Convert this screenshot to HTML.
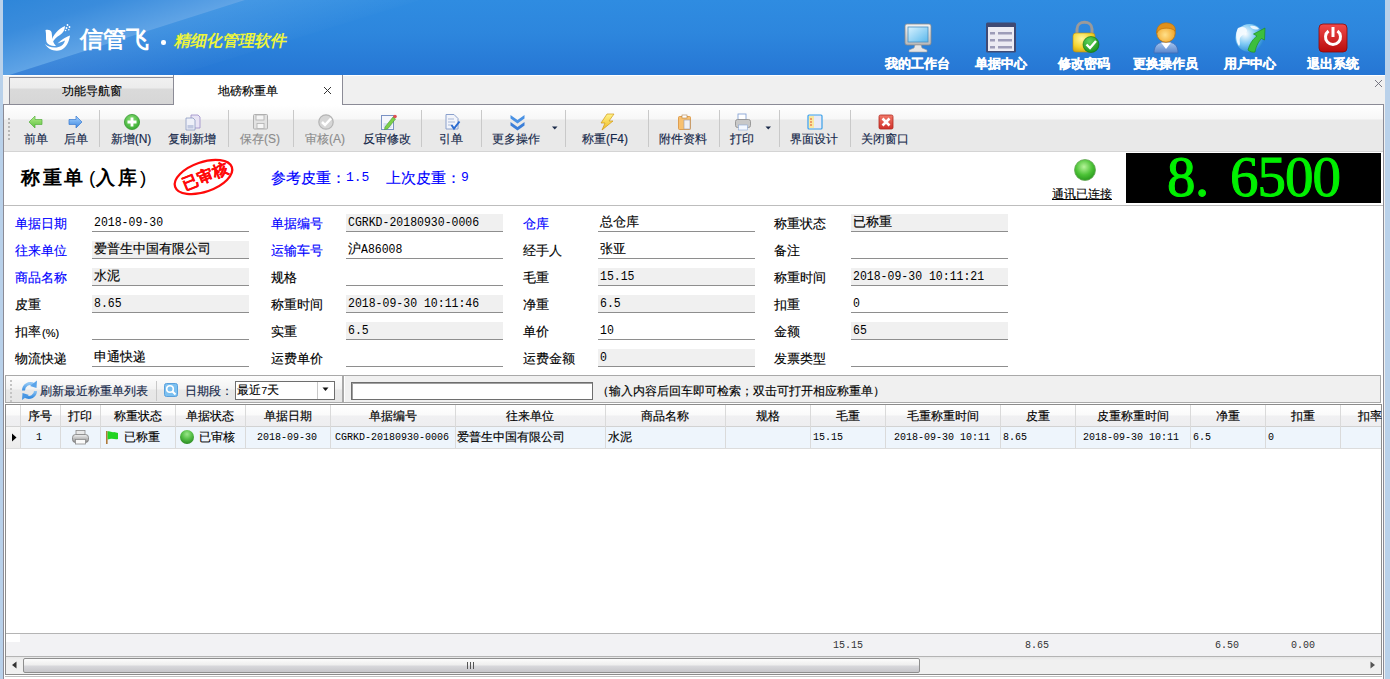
<!DOCTYPE html>
<html><head><meta charset="utf-8">
<style>
*{box-sizing:border-box;margin:0;padding:0}
html,body{width:1390px;height:679px;overflow:hidden;background:#f0f0f0;font-family:"Liberation Sans",sans-serif;font-size:12px;color:#000;-webkit-text-stroke:0.15px currentColor}
.a{position:absolute}
#hdr{left:0;top:0;width:1390px;height:75px;background:linear-gradient(#2f86dc,#2878d4);overflow:hidden}
#hl{left:0;top:0;width:1390px;height:75px;background:linear-gradient(162.4deg,rgba(255,255,255,0.16) 0,rgba(255,255,255,0.10) 39.5%,rgba(255,255,255,0) 39.6%)}
#lstrip{left:0;top:0;width:3px;height:679px;background:#b9d1ea}
#rstrip{left:1385px;top:0;width:5px;height:679px;background:#b9d1ea}
.hbtn{position:absolute;top:22px;width:70px;height:50px;text-align:center;color:#fff;font-weight:bold;font-size:12px}
.hbtn .ic{position:absolute;left:19px;top:0;width:32px;height:32px}
.hbtn .lb{position:absolute;left:-10px;width:90px;top:34px;line-height:14px;text-align:center;white-space:nowrap}
#tabbar{left:3px;top:75px;width:1382px;height:30px;background:#f0f0f0;border-top:1px solid #fff}
.tab{position:absolute;top:77px;height:28px;border:1px solid #8b8b96;border-bottom:none;text-align:center;line-height:26px;font-size:12px}
#tb{left:3px;top:104px;width:1381px;height:48px;border:1px solid #8b8b96;border-bottom:none;background:linear-gradient(#ffffff 0,#f7f7f7 14px,#e9e9e9 15px,#e9e9e9 100%)}
.tbb{position:absolute;top:0;height:46px;text-align:center;color:#15284a;font-size:12px;white-space:nowrap}
.tbb .lb{position:absolute;top:27px;left:0;right:0;line-height:14px}
.tbb .ic{position:absolute;top:9px;width:16px;height:16px}
.sep{position:absolute;top:5px;width:1px;height:37px;background:#c9c9c9}
#main{left:3px;top:151px;width:1381px;height:528px;background:#fff;border-left:1px solid #8b8b96;border-right:1px solid #8b8b96}
.lbl{position:absolute;font-size:13px;line-height:14px;white-space:nowrap}
.blue{color:#0000ff}
.inp{position:absolute;width:157px;height:18px;border-bottom:1px solid #8e8e8e;font-size:13px;line-height:15px;padding-left:2px;white-space:nowrap;overflow:hidden}
.g{background:#f0f0f0}
.tbl{top:131px;text-align:center;color:#15284a;font-size:12px;line-height:16px;white-space:nowrap}
.dis{color:#8c8c8c}
.mn{font-family:"Liberation Mono",monospace}
.bign{top:147px;font-family:'Liberation Serif',serif;font-size:57px;line-height:60px;color:#00f000;white-space:nowrap;-webkit-text-stroke:1px #00f000}
.gh{top:408px;text-align:center;font-size:12px;line-height:16px;white-space:nowrap}
.gr{top:429px;font-size:12px;line-height:16px;white-space:nowrap}
.mnr{font-family:"Liberation Mono",monospace;font-size:11.5px;transform:scaleX(0.87);transform-origin:0 0}
.ttl{top:166px;font-size:19px;font-weight:bold;line-height:24px;white-space:nowrap;letter-spacing:2.5px}
.mono,.mnr,.mn,.ttl,.nostk{-webkit-text-stroke:0 !important}
.mono{font-family:"Liberation Mono",monospace;font-size:13px;display:inline-block;transform:scaleX(0.885);transform-origin:0 0}
</style></head><body>
<div id="hdr" class="a">
<svg class="a" style="left:0;top:0" width="1390" height="75">
<defs>
<linearGradient id="hlg" gradientUnits="userSpaceOnUse" x1="0" y1="0" x2="22.5" y2="70.8"><stop offset="0" stop-color="#2e86d9"/><stop offset="0.45" stop-color="#3a8cdc"/><stop offset="1" stop-color="#60a4e6"/></linearGradient>
<linearGradient id="hlg2" gradientUnits="userSpaceOnUse" x1="22.5" y1="70.8" x2="40" y2="126"><stop offset="0" stop-color="rgba(255,255,255,0.10)"/><stop offset="1" stop-color="rgba(255,255,255,0)"/></linearGradient>
<linearGradient id="hbg" x1="0" y1="0" x2="0" y2="1"><stop offset="0" stop-color="#2f8ce1"/><stop offset="0.45" stop-color="#2d86dd"/><stop offset="1" stop-color="#2676d4"/></linearGradient>
</defs>
<rect x="0" y="0" width="1390" height="75" fill="url(#hbg)"/>
<polygon points="0,0 245,0 0,78" fill="url(#hlg)"/>
<polygon points="0,78 245,0 420,0 0,130" fill="url(#hlg2)"/>
<!-- logo mark -->
<g transform="translate(40,20)" fill="#fff">
<path d="M5.5,10 C8,9.2 10.5,9.8 11.5,12 C12,14 12,17 12.5,20 C13.5,23 15,25 16,26 C12,26.5 8,25 6.5,22 C5.5,19 6.5,15 5.5,10 Z"/>
<path d="M11.5,21 C13,15 18,9 25,6 C25,10 23,13 20,15 C16,17 13.5,20 12.5,23 Z"/>
<path d="M5,24 C8,29.5 15,32 21,30 C26,28 29,22 30,15.5 C27,16.5 23,18.5 17.5,23.5 C21,22 24,21 25,20.5 C24,25 20,27.5 15,27.5 C10.5,27.5 7,26 5,24 Z"/>
<circle cx="27.5" cy="5" r="0.9"/><circle cx="29.5" cy="7" r="0.9"/><circle cx="26.5" cy="8" r="0.9"/><circle cx="28.8" cy="9.8" r="0.8"/><circle cx="25.5" cy="10.5" r="0.8"/>
</g>
</svg>
<div class="a nostk" style="left:80px;top:25px;font-size:23px;font-weight:bold;color:#fff;letter-spacing:0px;line-height:28px">信管飞</div>
<div class="a" style="left:161px;top:40px;width:4.5px;height:4.5px;border-radius:50%;background:#fff"></div>
<div class="a nostk" style="left:175px;top:31px;font-size:16px;font-weight:bold;color:#ecf43c;line-height:20px;transform:skewX(-12deg);white-space:nowrap">精细化管理软件</div>
</div>

<!-- header buttons -->
<svg class="a" style="left:0;top:0" width="1390" height="75">
<defs>
<linearGradient id="scr" x1="0" y1="0" x2="1" y2="1"><stop offset="0" stop-color="#d8f2ff"/><stop offset="1" stop-color="#5ab8ec"/></linearGradient>
<linearGradient id="mon" x1="0" y1="0" x2="0" y2="1"><stop offset="0" stop-color="#f4f4f4"/><stop offset="1" stop-color="#b8b8b8"/></linearGradient>
<radialGradient id="lockg" cx="0.4" cy="0.3" r="0.8"><stop offset="0" stop-color="#fff7a0"/><stop offset="0.6" stop-color="#f2d22a"/><stop offset="1" stop-color="#c89a10"/></radialGradient>
<radialGradient id="chk" cx="0.4" cy="0.3" r="0.8"><stop offset="0" stop-color="#5fd35a"/><stop offset="1" stop-color="#158a17"/></radialGradient>
<radialGradient id="head" cx="0.45" cy="0.6" r="0.6"><stop offset="0" stop-color="#ffe08a"/><stop offset="1" stop-color="#f0a020"/></radialGradient>
<linearGradient id="body" x1="0" y1="0" x2="0" y2="1"><stop offset="0" stop-color="#a8c8f0"/><stop offset="1" stop-color="#5a86cc"/></linearGradient>
<radialGradient id="glb" cx="0.35" cy="0.35" r="0.75"><stop offset="0" stop-color="#ffffff"/><stop offset="0.5" stop-color="#7cc8f4"/><stop offset="1" stop-color="#1e7ed0"/></radialGradient>
<linearGradient id="pwr" x1="0" y1="0" x2="0" y2="1"><stop offset="0" stop-color="#f04a4a"/><stop offset="1" stop-color="#b80c0c"/></linearGradient>
</defs>
<!-- monitor -->
<rect x="905" y="24" width="26" height="21" rx="2" fill="url(#mon)" stroke="#8a8a8a" stroke-width="0.8"/>
<rect x="908" y="27" width="20" height="15" fill="url(#scr)" stroke="#4a90c0" stroke-width="0.8"/>
<path d="M915,45 L921,45 L922,48 L927,50 L927,52 L909,52 L909,50 L914,48 Z" fill="#e6e6e6" stroke="#9a9a9a" stroke-width="0.6"/>
<!-- doc list -->
<rect x="986" y="22.5" width="30" height="30" rx="1.5" fill="#3f4a74"/>
<rect x="988" y="27" width="26" height="24" fill="#ecebf3"/>
<rect x="990" y="32" width="5" height="2.5" fill="#9d9cb8"/><rect x="998" y="32" width="14" height="2.5" fill="#9d9cb8"/>
<rect x="990" y="39" width="5" height="2.5" fill="#9d9cb8"/><rect x="998" y="39" width="14" height="2.5" fill="#9d9cb8"/>
<rect x="990" y="46" width="5" height="2.5" fill="#9d9cb8"/><rect x="998" y="46" width="14" height="2.5" fill="#9d9cb8"/>
<!-- lock -->
<path d="M1077,34 L1077,29 C1077,20 1092,20 1092,29 L1092,34" fill="none" stroke="#9a9a9a" stroke-width="3"/>
<rect x="1073" y="33" width="22" height="19" rx="3" fill="url(#lockg)" stroke="#c09010" stroke-width="0.6"/>
<circle cx="1091" cy="44.5" r="8" fill="url(#chk)" stroke="#0e6e10" stroke-width="0.6"/>
<path d="M1086.5,44.5 L1090,48 L1096,41" fill="none" stroke="#fff" stroke-width="2.4"/>
<!-- person -->
<path d="M1154,53 C1154,45 1158,42 1166,42 C1174,42 1178,45 1178,53 Z" fill="url(#body)" stroke="#3d6cb8" stroke-width="0.8"/>
<path d="M1161,42.5 L1166,49 L1171,42.5 Z" fill="#fff"/>
<circle cx="1166" cy="33" r="9.3" fill="url(#head)" stroke="#b8700c" stroke-width="0.8"/>
<path d="M1156.8,33 C1156,24 1164,22 1168,23 C1173,23.5 1176,27 1175.2,31 C1172,28 1166,27.5 1161,29 C1159,30 1158,31 1156.8,33 Z" fill="#e0901a" stroke="#b8700c" stroke-width="0.6"/>
<!-- globe -->
<circle cx="1249.5" cy="38" r="14" fill="url(#glb)"/>
<path d="M1238,28 C1242,26 1247,27 1247,31 C1246,35 1242,34 1240,38 C1239,41 1241,44 1239,46 C1236,42 1235,33 1238,28 Z" fill="#f4fbff" opacity="0.95"/>
<path d="M1250,26 C1254,25 1258,27 1259,29 C1256,30 1252,30 1250,26 Z" fill="#f4fbff" opacity="0.9"/>
<path d="M1248,50 C1250,43 1253,39 1257,36 L1253.5,34 L1265,28 L1264.5,40 L1261.5,38.5 C1259,41 1256,46 1255,52 C1253,52.5 1250,52 1248,50 Z" fill="#3cbf3c" stroke="#1f8f1f" stroke-width="0.7"/>
<!-- power -->
<rect x="1319" y="24" width="28" height="28" rx="4" fill="url(#pwr)" stroke="#8a0808" stroke-width="0.8"/>
<path d="M1328.5,31 A7.5,7.5 0 1 0 1337.5,31" fill="none" stroke="#fff" stroke-width="3"/>
<line x1="1333" y1="27" x2="1333" y2="37" stroke="#fff" stroke-width="3"/>
</svg>
<div class="a" style="left:870px;top:56px;width:95px;text-align:center;color:#fff;font-weight:bold;font-size:13px;line-height:16px;-webkit-text-stroke:0.3px #fff">我的工作台</div>
<div class="a" style="left:953px;top:56px;width:95px;text-align:center;color:#fff;font-weight:bold;font-size:13px;line-height:16px;-webkit-text-stroke:0.3px #fff">单据中心</div>
<div class="a" style="left:1036px;top:56px;width:95px;text-align:center;color:#fff;font-weight:bold;font-size:13px;line-height:16px;-webkit-text-stroke:0.3px #fff">修改密码</div>
<div class="a" style="left:1118px;top:56px;width:95px;text-align:center;color:#fff;font-weight:bold;font-size:13px;line-height:16px;-webkit-text-stroke:0.3px #fff">更换操作员</div>
<div class="a" style="left:1202px;top:56px;width:95px;text-align:center;color:#fff;font-weight:bold;font-size:13px;line-height:16px;-webkit-text-stroke:0.3px #fff">用户中心</div>
<div class="a" style="left:1285px;top:56px;width:95px;text-align:center;color:#fff;font-weight:bold;font-size:13px;line-height:16px;-webkit-text-stroke:0.3px #fff">退出系统</div>
<div id="lstrip" class="a"></div>
<div id="rstrip" class="a"></div>

<div id="tabbar" class="a"></div>
<div class="tab" style="left:9px;width:165px;background:linear-gradient(#f1f1f1 0,#ececec 10px,#dadada 11px,#d6d6d6 100%)">功能导航窗</div>
<div class="tab" style="left:173px;top:75px;width:170px;background:#fff;height:30px;border-top:none;z-index:2;padding-top:2px"><span style="position:absolute;left:44px;top:3px">地磅称重单</span><svg style="position:absolute;left:149px;top:11px" width="9" height="9"><path d="M1,1 L8,8 M8,1 L1,8" stroke="#333" stroke-width="1"/></svg></div>

<svg class="a" style="left:1374px;top:79px" width="10" height="10"><path d="M1,1 L8,8 M8,1 L1,8" stroke="#6a6a76" stroke-width="0.9"/></svg>
<div id="tb" class="a"></div>
<div id="main" class="a"></div>


<!-- title area -->
<div class="a" style="left:4px;top:151px;width:1379px;height:1px;background:#d4d4d4"></div>
<div class="a ttl" style="left:21px">称重单</div><div class="a ttl" style="left:89px;font-weight:normal;-webkit-text-stroke:0.6px #000">(</div><div class="a ttl" style="left:96px">入库</div><div class="a ttl" style="left:140px;font-weight:normal;-webkit-text-stroke:0.6px #000">)</div>
<svg class="a" style="left:168px;top:154px" width="72" height="46">
<g transform="rotate(-19 35.5 23)">
<ellipse cx="35.5" cy="23" rx="30" ry="14.8" fill="none" stroke="#ff0a0a" stroke-width="2.3"/>
</g>
<g transform="rotate(-22 36 23)">
<text x="37.5" y="28" text-anchor="middle" font-size="15.5" font-weight="bold" fill="#ff0a0a" stroke="#ff0a0a" stroke-width="0.3" font-family="Liberation Sans,sans-serif">已审核</text>
</g>
</svg>
<div class="a" style="left:271px;top:169px;font-size:14.5px;line-height:18px;color:#0000ff;white-space:nowrap">参考皮重：</div><div class="a mn" style="left:346px;top:169px;font-size:13px;line-height:18px;color:#0000ff;letter-spacing:0px">1.5</div><div class="a" style="left:386px;top:169px;font-size:14.5px;line-height:18px;color:#0000ff;white-space:nowrap">上次皮重：</div><div class="a mn" style="left:461px;top:169px;font-size:13px;line-height:18px;color:#0000ff">9</div>
<svg class="a" style="left:1072px;top:157px" width="26" height="26">
<defs><radialGradient id="led" cx="0.45" cy="0.35" r="0.65"><stop offset="0" stop-color="#b6f49a"/><stop offset="0.6" stop-color="#4cc236"/><stop offset="1" stop-color="#2a9a1e"/></radialGradient></defs>
<circle cx="13" cy="13" r="10.5" fill="url(#led)" stroke="#6aa85a" stroke-width="0.8"/>
</svg>
<div class="a" style="left:1052px;top:186px;font-size:12px;line-height:16px;text-decoration:underline;white-space:nowrap">通讯已连接</div>
<div class="a" style="left:1126px;top:153px;height:50px;background:#000;width:255px"></div>
<div class="a bign" style="left:1167px">8</div><div class="a bign" style="left:1195px">.</div><div class="a bign" style="left:1230px;letter-spacing:-1px">6500</div>
<div class="a" style="left:4px;top:205px;width:1379px;height:1px;background:#bdbdbd"></div>

<!-- form -->
<div class="a lbl blue" style="left:15px;top:217px">单据日期</div>
<div class="inp" style="left:92px;top:214px"><span class="mono">2018-09-30</span></div>
<div class="a lbl blue" style="left:271px;top:217px">单据编号</div>
<div class="inp g" style="left:346px;top:214px"><span class="mono">CGRKD-20180930-0006</span></div>
<div class="a lbl blue" style="left:523px;top:217px">仓库</div>
<div class="inp" style="left:598px;top:214px">总仓库</div>
<div class="a lbl" style="left:774px;top:217px">称重状态</div>
<div class="inp g" style="left:851px;top:214px">已称重</div>
<div class="a lbl blue" style="left:15px;top:244px">往来单位</div>
<div class="inp g" style="left:92px;top:241px">爱普生中国有限公司</div>
<div class="a lbl blue" style="left:271px;top:244px">运输车号</div>
<div class="inp" style="left:346px;top:241px">沪<span class="mono">A86008</span></div>
<div class="a lbl" style="left:523px;top:244px">经手人</div>
<div class="inp" style="left:598px;top:241px">张亚</div>
<div class="a lbl" style="left:774px;top:244px">备注</div>
<div class="inp" style="left:851px;top:241px"></div>
<div class="a lbl blue" style="left:15px;top:271px">商品名称</div>
<div class="inp g" style="left:92px;top:268px">水泥</div>
<div class="a lbl" style="left:271px;top:271px">规格</div>
<div class="inp" style="left:346px;top:268px"></div>
<div class="a lbl" style="left:523px;top:271px">毛重</div>
<div class="inp g" style="left:598px;top:268px"><span class="mono">15.15</span></div>
<div class="a lbl" style="left:774px;top:271px">称重时间</div>
<div class="inp g" style="left:851px;top:268px"><span class="mono">2018-09-30 10:11:21</span></div>
<div class="a lbl" style="left:15px;top:298px">皮重</div>
<div class="inp g" style="left:92px;top:295px"><span class="mono">8.65</span></div>
<div class="a lbl" style="left:271px;top:298px">称重时间</div>
<div class="inp g" style="left:346px;top:295px"><span class="mono">2018-09-30 10:11:46</span></div>
<div class="a lbl" style="left:523px;top:298px">净重</div>
<div class="inp g" style="left:598px;top:295px"><span class="mono">6.5</span></div>
<div class="a lbl" style="left:774px;top:298px">扣重</div>
<div class="inp" style="left:851px;top:295px"><span class="mono">0</span></div>
<div class="a lbl" style="left:15px;top:325px">扣率</div><div class="a lbl" style="left:42px;top:326px;font-size:11px">(%)</div>
<div class="inp" style="left:92px;top:322px"></div>
<div class="a lbl" style="left:271px;top:325px">实重</div>
<div class="inp g" style="left:346px;top:322px"><span class="mono">6.5</span></div>
<div class="a lbl" style="left:523px;top:325px">单价</div>
<div class="inp" style="left:598px;top:322px"><span class="mono">10</span></div>
<div class="a lbl" style="left:774px;top:325px">金额</div>
<div class="inp g" style="left:851px;top:322px"><span class="mono">65</span></div>
<div class="a lbl" style="left:15px;top:352px">物流快递</div>
<div class="inp" style="left:92px;top:349px">申通快递</div>
<div class="a lbl" style="left:271px;top:352px">运费单价</div>
<div class="inp" style="left:346px;top:349px"></div>
<div class="a lbl" style="left:523px;top:352px">运费金额</div>
<div class="inp g" style="left:598px;top:349px"><span class="mono">0</span></div>
<div class="a lbl" style="left:774px;top:352px">发票类型</div>
<div class="inp" style="left:851px;top:349px"></div>
<!-- search bar -->
<div class="a" style="left:5px;top:375px;width:338px;height:28px;border:1px solid #a9a9a9;background:linear-gradient(#fdfdfd 0,#f3f3f3 13px,#e8e8e8 14px,#e6e6e6 100%)"></div>
<div class="a" style="left:343px;top:375px;width:1038px;height:28px;border:1px solid #a9a9a9;background:#f0f0f0;box-shadow:inset 1px 0 #fff"></div>
<svg class="a" style="left:0;top:375px" width="360" height="30">
<g fill="#c4c4c4"><rect x="10" y="5" width="2" height="2"/><rect x="10" y="9" width="2" height="2"/><rect x="10" y="13" width="2" height="2"/><rect x="10" y="17" width="2" height="2"/><rect x="10" y="21" width="2" height="2"/><rect x="10" y="25" width="2" height="2"/></g>
<defs><linearGradient id="rfg" x1="0" y1="0" x2="0" y2="1"><stop offset="0" stop-color="#8cc4f4"/><stop offset="1" stop-color="#3a8ee0"/></linearGradient></defs>
<path d="M23.5,15.5 C23.5,10 29,7 34,9.5" fill="none" stroke="url(#rfg)" stroke-width="3"/>
<path d="M37,5.5 L36.5,13 L30,11 Z" fill="#5aa4ea"/>
<path d="M35.5,16 C35.5,21 30,24 25,21.5" fill="none" stroke="url(#rfg)" stroke-width="3"/>
<path d="M22,25 L22.5,18 L29,20 Z" fill="#4a98e4"/>
<rect x="156" y="6" width="1" height="20" fill="#c8c8c8"/>
<rect x="164.5" y="8.5" width="13" height="13" rx="2" fill="#7cc0f0" stroke="#5aa0dc" stroke-width="1"/>
<circle cx="170" cy="14" r="3.3" fill="none" stroke="#fff" stroke-width="1.6"/>
<path d="M172.5,16.5 L175.5,19.5" stroke="#fff" stroke-width="2"/>
</svg>
<div class="a" style="left:40px;top:383px;font-size:12px;line-height:16px;color:#15284a;white-space:nowrap">刷新最近称重单列表</div>
<div class="a" style="left:185px;top:383px;font-size:12px;line-height:16px;color:#15284a;white-space:nowrap">日期段：</div>
<div class="a" style="left:235px;top:381px;width:100px;height:19px;border:1px solid #6e6e6e;background:#fff"></div>
<div class="a" style="left:317px;top:382px;width:1px;height:17px;background:#c8c8c8"></div>
<svg class="a" style="left:322px;top:387px" width="8" height="5"><path d="M0.5,0.5 L6.5,0.5 L3.5,4 Z" fill="#111"/></svg>
<div class="a" style="left:237px;top:382px;font-size:12px;line-height:17px;white-space:nowrap">最近<span class="mn" style="font-size:11px;letter-spacing:-1px">7</span>天</div>
<div class="a" style="left:351px;top:382px;width:242px;height:18px;border:1px solid #6e6e6e;background:#fff;box-shadow:inset 1px 1px #a0a0a0"></div>
<div class="a" style="left:597px;top:383px;font-size:12px;line-height:16px;white-space:nowrap">（输入内容后回车即可检索；双击可打开相应称重单）</div>

<div class="a" style="left:5px;top:404px;width:1377px;height:271px;border:1px solid #8c8c8c;background:#fff"></div>
<div class="a" style="left:6px;top:405px;width:1375px;height:21px;background:linear-gradient(#ffffff 0,#fafafa 10px,#f0f0f2 11px,#eeeef0 100%)"></div>
<div class="a" style="left:6px;top:426px;width:1375px;height:1px;background:#d2d2d2"></div>
<div class="a" style="left:20px;top:427px;width:1361px;height:21px;background:#eef5fc"></div>
<div class="a" style="left:6px;top:427px;width:14px;height:21px;background:linear-gradient(#f6f6f6,#ececec)"></div>
<div class="a" style="left:6px;top:448px;width:1375px;height:1px;background:#dcdcdc"></div>
<div class="a" style="left:20px;top:405px;width:1px;height:43px;background:#dadada"></div>
<div class="a" style="left:60px;top:405px;width:1px;height:43px;background:#dadada"></div>
<div class="a" style="left:100px;top:405px;width:1px;height:43px;background:#dadada"></div>
<div class="a" style="left:175px;top:405px;width:1px;height:43px;background:#dadada"></div>
<div class="a" style="left:245px;top:405px;width:1px;height:43px;background:#dadada"></div>
<div class="a" style="left:330px;top:405px;width:1px;height:43px;background:#dadada"></div>
<div class="a" style="left:455px;top:405px;width:1px;height:43px;background:#dadada"></div>
<div class="a" style="left:605px;top:405px;width:1px;height:43px;background:#dadada"></div>
<div class="a" style="left:725px;top:405px;width:1px;height:43px;background:#dadada"></div>
<div class="a" style="left:810px;top:405px;width:1px;height:43px;background:#dadada"></div>
<div class="a" style="left:885px;top:405px;width:1px;height:43px;background:#dadada"></div>
<div class="a" style="left:1000px;top:405px;width:1px;height:43px;background:#dadada"></div>
<div class="a" style="left:1075px;top:405px;width:1px;height:43px;background:#dadada"></div>
<div class="a" style="left:1190px;top:405px;width:1px;height:43px;background:#dadada"></div>
<div class="a" style="left:1265px;top:405px;width:1px;height:43px;background:#dadada"></div>
<div class="a" style="left:1340px;top:405px;width:1px;height:43px;background:#dadada"></div>
<div class="a gh" style="left:20px;width:40px">序号</div>
<div class="a gh" style="left:60px;width:40px">打印</div>
<div class="a gh" style="left:100px;width:75px">称重状态</div>
<div class="a gh" style="left:175px;width:70px">单据状态</div>
<div class="a gh" style="left:245px;width:85px">单据日期</div>
<div class="a gh" style="left:330px;width:125px">单据编号</div>
<div class="a gh" style="left:455px;width:150px">往来单位</div>
<div class="a gh" style="left:605px;width:120px">商品名称</div>
<div class="a gh" style="left:725px;width:85px">规格</div>
<div class="a gh" style="left:810px;width:75px">毛重</div>
<div class="a gh" style="left:885px;width:115px">毛重称重时间</div>
<div class="a gh" style="left:1000px;width:75px">皮重</div>
<div class="a gh" style="left:1075px;width:115px">皮重称重时间</div>
<div class="a gh" style="left:1190px;width:75px">净重</div>
<div class="a gh" style="left:1265px;width:75px">扣重</div>
<div class="a gh" style="left:1340px;width:60px">扣率</div>
<div class="a" style="left:1382px;top:405px;width:1px;height:0px"></div>
<svg class="a" style="left:10px;top:433px" width="8" height="10"><path d="M2,0.5 L6.5,4.5 L2,8.5 Z" fill="#000"/></svg>
<div class="a gr mnr" style="left:36px">1</div>
<svg class="a" style="left:71px;top:429px" width="20" height="18">
<defs><linearGradient id="prg" x1="0" y1="0" x2="0" y2="1"><stop offset="0" stop-color="#f2f2f2"/><stop offset="1" stop-color="#8a8a8a"/></linearGradient></defs>
<rect x="5" y="1.5" width="9" height="5" fill="#e8e8e8" stroke="#8a8a8a" stroke-width="0.8"/>
<rect x="1.5" y="5.5" width="16" height="8" rx="3" fill="url(#prg)" stroke="#7a7a7a" stroke-width="0.8"/>
<rect x="4.5" y="10.5" width="10" height="4.5" fill="#fafafa" stroke="#8a8a8a" stroke-width="0.8"/>
</svg>
<svg class="a" style="left:104px;top:430px" width="16" height="15">
<rect x="2" y="1" width="1.6" height="13" fill="#b07a3a"/>
<path d="M3.6,1.5 C6,0.5 8,3 10,2 L14,3 L14,9 C11,10 9,8 6,9 L3.6,9.5 Z" fill="#22d422"/>
</svg>
<div class="a gr" style="left:124px">已称重</div>
<svg class="a" style="left:179px;top:429px" width="16" height="16">
<defs><radialGradient id="gb" cx="0.5" cy="0.3" r="0.7"><stop offset="0" stop-color="#9ae68a"/><stop offset="0.5" stop-color="#56c048"/><stop offset="1" stop-color="#2a8a22"/></radialGradient></defs>
<circle cx="8" cy="8" r="7" fill="url(#gb)"/>
</svg>
<div class="a gr" style="left:199px">已审核</div>
<div class="a gr mnr" style="left:257px">2018-09-30</div>
<div class="a gr mnr" style="left:335px">CGRKD-20180930-0006</div>
<div class="a gr" style="left:457px">爱普生中国有限公司</div>
<div class="a gr" style="left:608px">水泥</div>
<div class="a gr mnr" style="left:813px">15.15</div>
<div class="a gr mnr" style="left:894px">2018-09-30 10:11</div>
<div class="a gr mnr" style="left:1003px">8.65</div>
<div class="a gr mnr" style="left:1083px">2018-09-30 10:11</div>
<div class="a gr mnr" style="left:1193px">6.5</div>
<div class="a gr mnr" style="left:1268px">0</div>
<div class="a" style="left:6px;top:633px;width:1375px;height:1px;background:#b4b4b4"></div>
<div class="a" style="left:6px;top:634px;width:1375px;height:22px;background:#f2f2f4"></div>
<div class="a" style="left:6px;top:634px;width:14px;height:8px;background:#fff"></div>
<div class="a" style="left:6px;top:656px;width:1375px;height:1px;background:#b4b4b4"></div>
<div class="a gr mnr" style="left:833px;top:637px;color:#333">15.15</div>
<div class="a gr mnr" style="left:1025px;top:637px;color:#333">8.65</div>
<div class="a gr mnr" style="left:1215px;top:637px;color:#333">6.50</div>
<div class="a gr mnr" style="left:1291px;top:637px;color:#333">0.00</div>
<div class="a" style="left:6px;top:657px;width:1375px;height:17px;background:linear-gradient(#e6e6e6,#f0f0f0 3px,#f0f0f0)"></div>
<svg class="a" style="left:10px;top:661px" width="8" height="9"><path d="M6.5,0.5 L6.5,7.5 L2,4 Z" fill="#333"/></svg>
<svg class="a" style="left:1369px;top:661px" width="8" height="9"><path d="M1.5,0.5 L1.5,7.5 L6,4 Z" fill="#555"/></svg>
<div class="a" style="left:23px;top:658px;width:897px;height:15px;border:1px solid #8e8e8e;border-radius:2px;background:linear-gradient(#fcfcfc 0,#eeeeee 6px,#d8d8dc 7px,#c6c6ca 100%)"></div>
<div class="a" style="left:467px;top:662px;width:7px;height:7px;border-left:1px solid #555;border-right:1px solid #555"><div class="a" style="left:2px;top:0;width:1px;height:7px;background:#555"></div></div>
<div class="a" style="left:5px;top:676px;width:1377px;height:1px;background:#c0c0c0"></div>
<!-- toolbar -->
<svg class="a" style="left:0;top:104px" width="920" height="48">
<defs>
<linearGradient id="garr" x1="0" y1="0" x2="0" y2="1"><stop offset="0" stop-color="#b6ee8a"/><stop offset="1" stop-color="#5cc040"/></linearGradient>
<linearGradient id="barr" x1="0" y1="0" x2="0" y2="1"><stop offset="0" stop-color="#a8d4ff"/><stop offset="1" stop-color="#3a86e0"/></linearGradient>
<radialGradient id="gplus" cx="0.45" cy="0.35" r="0.7"><stop offset="0" stop-color="#8ee27a"/><stop offset="1" stop-color="#2fa52a"/></radialGradient>
<linearGradient id="bolt" x1="0" y1="0" x2="0" y2="1"><stop offset="0" stop-color="#fff48a"/><stop offset="1" stop-color="#f0b820"/></linearGradient>
<linearGradient id="redx" x1="0" y1="0" x2="0" y2="1"><stop offset="0" stop-color="#f27a6a"/><stop offset="1" stop-color="#d0302a"/></linearGradient>
</defs>
<g fill="#b8b8b8"><rect x="8" y="14" width="2" height="2"/><rect x="8" y="18" width="2" height="2"/><rect x="8" y="22" width="2" height="2"/><rect x="8" y="26" width="2" height="2"/><rect x="8" y="30" width="2" height="2"/><rect x="8" y="34" width="2" height="2"/></g>
<!-- prev arrow -->
<path d="M29,18 L35,12 L35,15.5 L42,15.5 L42,20.5 L35,20.5 L35,24 Z" fill="url(#garr)" stroke="#58b040" stroke-width="0.7"/>
<!-- next arrow -->
<path d="M82,18 L76,12 L76,15.5 L69,15.5 L69,20.5 L76,20.5 L76,24 Z" fill="url(#barr)" stroke="#3a7ad0" stroke-width="0.7"/>
<rect x="99" y="6" width="1" height="37" fill="#c9c9c9"/>
<!-- plus -->
<circle cx="132" cy="18" r="7.6" fill="url(#gplus)" stroke="#3a9a34" stroke-width="0.8"/>
<path d="M132,13.5 L132,22.5 M127.5,18 L136.5,18" stroke="#fff" stroke-width="2.8"/>
<!-- copy -->
<path d="M191,11 L198,11 L200,13 L200,24 L191,24 Z" fill="#e8e4f4" stroke="#9a8ac8" stroke-width="0.8"/>
<path d="M186,14 L193,14 L195,16 L195,26 L186,26 Z" fill="#eef0f8" stroke="#8a9ac0" stroke-width="0.8"/>
<rect x="187.5" y="21" width="6" height="3.5" fill="#c0c8e0"/>
<rect x="228" y="6" width="1" height="37" fill="#c9c9c9"/>
<!-- floppy disabled -->
<rect x="253.5" y="10.5" width="14" height="14.5" rx="1" fill="#e2e2e2" stroke="#b0b0b0" stroke-width="1"/>
<rect x="256" y="11" width="8" height="5" fill="#f6f6f6" stroke="#b0b0b0" stroke-width="0.8"/>
<rect x="257" y="19.5" width="7" height="5" fill="#f6f6f6" stroke="#b0b0b0" stroke-width="0.8"/>
<rect x="293" y="6" width="1" height="37" fill="#c9c9c9"/>
<!-- check disabled -->
<circle cx="326" cy="18" r="7.2" fill="#d6d6d6" stroke="#b4b4b4" stroke-width="1.2"/>
<path d="M322,18 L325,21 L331,14.5" fill="none" stroke="#fff" stroke-width="2.5"/>
<!-- edit doc -->
<rect x="381.5" y="11.5" width="12" height="14" fill="#f4f6fc" stroke="#7a92c4" stroke-width="1"/>
<rect x="383.5" y="19" width="8" height="5" fill="#d8e0f4"/>
<path d="M385,23 L393,13 L395.5,15 L387.5,25 L384.5,25.5 Z" fill="#7cd04a" stroke="#4a9a30" stroke-width="0.6"/>
<circle cx="395" cy="12.5" r="1.8" fill="#e05050"/>
<rect x="421" y="6" width="1" height="37" fill="#c9c9c9"/>
<!-- yindan -->
<path d="M446,10.5 L454,10.5 L458,14.5 L458,25 L446,25 Z" fill="#f2f4fa" stroke="#8aa0cc" stroke-width="1"/>
<path d="M448,15 L454,15 M448,18 L455,18 M448,21 L452,21" stroke="#a8b8d8" stroke-width="1"/>
<path d="M451.5,21 L454,24.5 L459.5,17.5" fill="none" stroke="#2a6ad0" stroke-width="2"/>
<rect x="481" y="6" width="1" height="37" fill="#c9c9c9"/>
<!-- more chevrons -->
<path d="M510.5,11 L517.5,16 L524.5,11 L524.5,14.5 L517.5,19.5 L510.5,14.5 Z" fill="#4a92e4"/>
<path d="M510.5,18 L517.5,23 L524.5,18 L524.5,21.5 L517.5,26.5 L510.5,21.5 Z" fill="#3a7ed8"/>
<path d="M552,22.5 L557.5,22.5 L554.75,25.5 Z" fill="#1a2a4a"/>
<rect x="565" y="6" width="1" height="37" fill="#c9c9c9"/>
<!-- bolt -->
<path d="M607,10 L614,10 L609,17 L613,17 L602,26 L605,19 L601,19 Z" fill="url(#bolt)" stroke="#d09a18" stroke-width="0.7"/>
<rect x="648" y="6" width="1" height="37" fill="#c9c9c9"/>
<!-- clipboard -->
<rect x="678.5" y="12.5" width="12" height="13" rx="1" fill="#f8c070" stroke="#d8903a" stroke-width="0.8"/>
<rect x="682" y="11" width="5" height="3" fill="#fff" stroke="#b0804a" stroke-width="0.6"/>
<rect x="684" y="16" width="6" height="9" fill="#f0f0f4" stroke="#9a9aaa" stroke-width="0.6"/>
<rect x="719" y="6" width="1" height="37" fill="#c9c9c9"/>
<!-- printer -->
<rect x="738" y="10" width="8" height="6" fill="#fff" stroke="#7a9ad0" stroke-width="0.8"/>
<rect x="735.5" y="15.5" width="15" height="8" rx="2" fill="#c8c8c8" stroke="#8a8a8a" stroke-width="0.8"/>
<rect x="738.5" y="21" width="9" height="5" fill="#f4f8ff" stroke="#8aa8d8" stroke-width="0.6"/>
<path d="M765.5,22.5 L771,22.5 L768.25,25.5 Z" fill="#1a2a4a"/>
<rect x="779" y="6" width="1" height="37" fill="#c9c9c9"/>
<!-- ui design -->
<rect x="808" y="11" width="14" height="14" rx="1" fill="#e8eaf6" stroke="#3aa0e8" stroke-width="1.2"/>
<rect x="809" y="12" width="5" height="12" fill="#f8e8a0"/>
<path d="M810,15 L812,15 M810,18 L812,18 M810,21 L812,21" stroke="#e05030" stroke-width="1.2"/>
<rect x="850" y="6" width="1" height="37" fill="#c9c9c9"/>
<!-- close red x -->
<rect x="879" y="11" width="14" height="14" rx="1.5" fill="url(#redx)" stroke="#b02a20" stroke-width="0.8"/>
<path d="M882.5,14.5 L889.5,21.5 M889.5,14.5 L882.5,21.5" stroke="#fff" stroke-width="2.6"/>
</svg>
<div class="a tbl" style="left:11px;width:50px">前单</div>
<div class="a tbl" style="left:51px;width:50px">后单</div>
<div class="a tbl" style="left:101px;width:60px">新增(N)</div>
<div class="a tbl" style="left:162px;width:60px">复制新增</div>
<div class="a tbl dis" style="left:230px;width:60px">保存(S)</div>
<div class="a tbl dis" style="left:295px;width:60px">审核(A)</div>
<div class="a tbl" style="left:357px;width:60px">反审修改</div>
<div class="a tbl" style="left:426px;width:50px">引单</div>
<div class="a tbl" style="left:486px;width:60px">更多操作</div>
<div class="a tbl" style="left:575px;width:60px">称重(F4)</div>
<div class="a tbl" style="left:653px;width:60px">附件资料</div>
<div class="a tbl" style="left:717px;width:50px">打印</div>
<div class="a tbl" style="left:784px;width:60px">界面设计</div>
<div class="a tbl" style="left:855px;width:60px">关闭窗口</div>


</body></html>
